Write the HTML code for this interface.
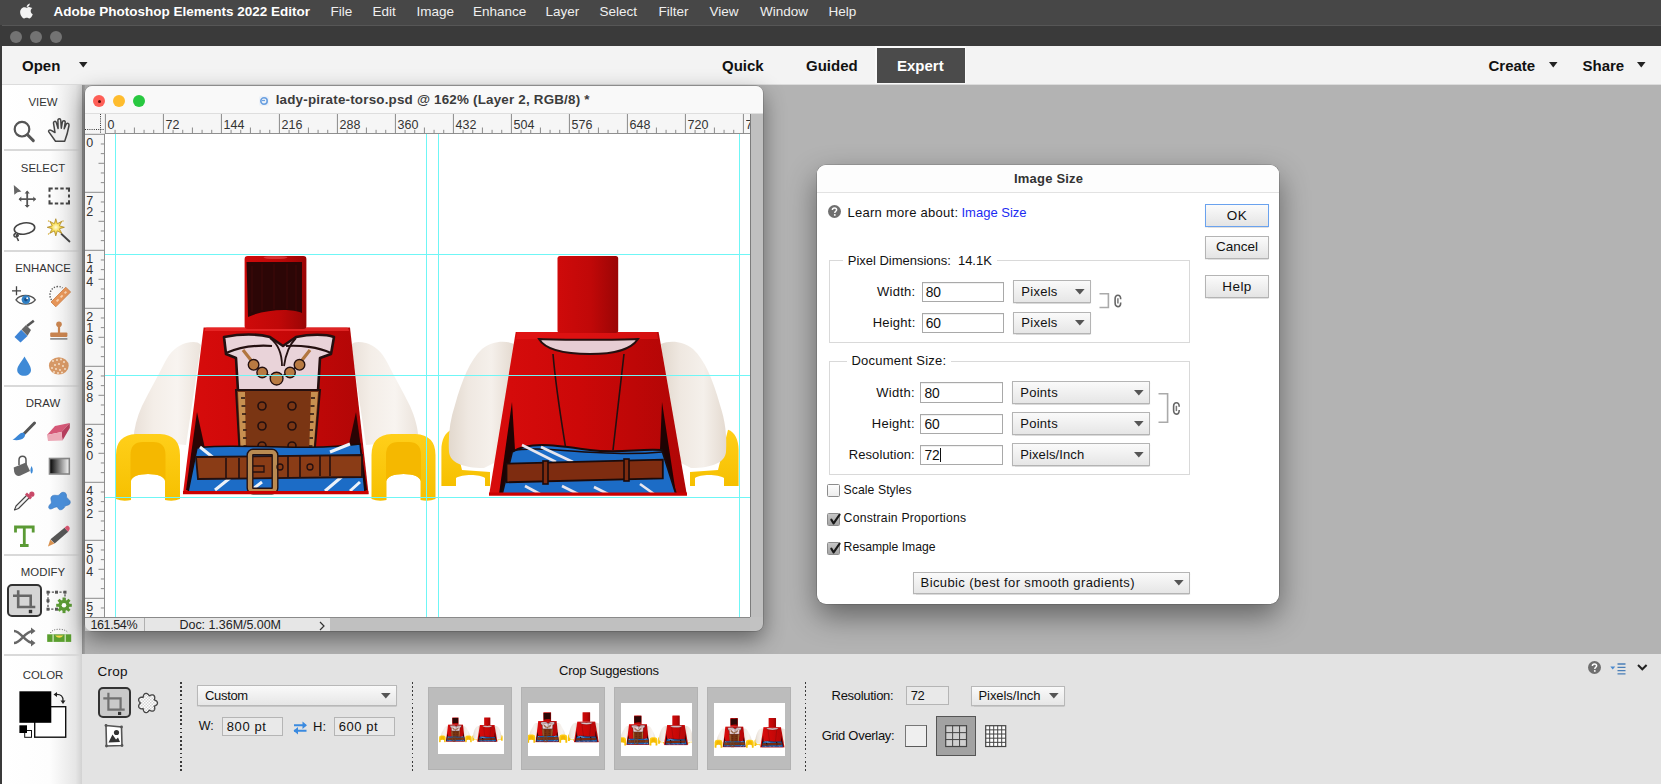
<!DOCTYPE html>
<html><head><meta charset="utf-8"><title>Photoshop Elements</title>
<style>
html,body{margin:0;padding:0;}
body{width:1661px;height:784px;position:relative;overflow:hidden;background:#b3b3b3;font-family:"Liberation Sans", sans-serif;}
.a{position:absolute;box-sizing:border-box;}
.t{position:absolute;white-space:nowrap;}
svg{position:absolute;overflow:visible;}
</style></head><body>

<div class="a" style="left:0px;top:0px;width:1661px;height:25px;background:#474747;"></div>
<svg style="left:20.3px;top:3.3px" width="14" height="17" viewBox="0 0 14 17"><g transform="scale(0.86)"><path d="M9.6 0.2c0.1 1.1-0.3 2.1-1 2.9-0.7 0.8-1.6 1.3-2.6 1.2-0.1-1 0.4-2 1-2.7 0.7-0.8 1.8-1.3 2.6-1.4z M12.6 5.6c-0.2 0.1-2 1.2-2 3.5 0 2.7 2.4 3.6 2.4 3.7 0 0.1-0.4 1.3-1.2 2.6-0.8 1.1-1.6 2.2-2.8 2.2-1.2 0-1.6-0.7-3-0.7-1.4 0-1.8 0.7-3 0.8C1.8 17.8 0.9 16.6 0.1 15.5-1.4 13.3-2.6 9.2-0.4 6.6 0.5 5.3 1.9 4.5 3.3 4.5c1.2 0 2.2 0.8 2.9 0.8 0.7 0 1.8-0.9 3.1-0.8 0.5 0 2 0.2 3.3 1.1z" fill="#f4f4f4" transform="translate(1.8,0.3)"/></g></svg>
<div class="t" style="left:53.5px;top:4.57px;font-size:13.5px;line-height:13.5px;color:#fff;font-weight:bold;">Adobe Photoshop Elements 2022 Editor</div>
<div class="t" style="left:330.5px;top:4.57px;font-size:13.5px;line-height:13.5px;color:#efefef;font-weight:normal;">File</div>
<div class="t" style="left:372.5px;top:4.57px;font-size:13.5px;line-height:13.5px;color:#efefef;font-weight:normal;">Edit</div>
<div class="t" style="left:416.5px;top:4.57px;font-size:13.5px;line-height:13.5px;color:#efefef;font-weight:normal;">Image</div>
<div class="t" style="left:473px;top:4.57px;font-size:13.5px;line-height:13.5px;color:#efefef;font-weight:normal;">Enhance</div>
<div class="t" style="left:545.5px;top:4.57px;font-size:13.5px;line-height:13.5px;color:#efefef;font-weight:normal;">Layer</div>
<div class="t" style="left:599.5px;top:4.57px;font-size:13.5px;line-height:13.5px;color:#efefef;font-weight:normal;">Select</div>
<div class="t" style="left:658.5px;top:4.57px;font-size:13.5px;line-height:13.5px;color:#efefef;font-weight:normal;">Filter</div>
<div class="t" style="left:709.5px;top:4.57px;font-size:13.5px;line-height:13.5px;color:#efefef;font-weight:normal;">View</div>
<div class="t" style="left:760px;top:4.57px;font-size:13.5px;line-height:13.5px;color:#efefef;font-weight:normal;">Window</div>
<div class="t" style="left:828.5px;top:4.57px;font-size:13.5px;line-height:13.5px;color:#efefef;font-weight:normal;">Help</div>
<div class="a" style="left:0px;top:25px;width:1661px;height:21px;background:#3a3a3a;border-top:1px solid #565656;"></div>
<div class="a" style="left:10px;top:31px;width:12px;height:12px;background:#737373;border-radius:50%;"></div>
<div class="a" style="left:30px;top:31px;width:12px;height:12px;background:#737373;border-radius:50%;"></div>
<div class="a" style="left:50px;top:31px;width:12px;height:12px;background:#737373;border-radius:50%;"></div>
<div class="a" style="left:0px;top:25px;width:2px;height:759px;background:#3a3a3a;"></div>
<div class="a" style="left:2px;top:46px;width:1659px;height:39px;background:#f3f3f3;border-bottom:1px solid #dcdcdc;"></div>
<div class="t" style="left:22px;top:57.80px;font-size:15px;line-height:15px;color:#111;font-weight:bold;">Open</div>
<svg style="left:79px;top:62px" width="9" height="6" viewBox="0 0 9 6"><path d="M0 0H8.5L4.25 5.5Z" fill="#222"/></svg>
<div class="t" style="left:722px;top:57.80px;font-size:15px;line-height:15px;color:#111;font-weight:bold;">Quick</div>
<div class="t" style="left:806px;top:57.80px;font-size:15px;line-height:15px;color:#111;font-weight:bold;">Guided</div>
<div class="a" style="left:875px;top:46px;width:91px;height:38px;background:#fafafa;"></div>
<div class="a" style="left:876.5px;top:47.5px;width:88px;height:35px;background:#4b4b4b;"></div>
<div class="t" style="left:897px;top:57.80px;font-size:15px;line-height:15px;color:#fff;font-weight:bold;">Expert</div>
<div class="t" style="left:1488.5px;top:57.80px;font-size:15px;line-height:15px;color:#111;font-weight:bold;">Create</div>
<svg style="left:1548.5px;top:62px" width="9" height="6" viewBox="0 0 9 6"><path d="M0 0H8.5L4.25 5.5Z" fill="#222"/></svg>
<div class="t" style="left:1582.5px;top:57.80px;font-size:15px;line-height:15px;color:#111;font-weight:bold;">Share</div>
<svg style="left:1636.5px;top:62px" width="9" height="6" viewBox="0 0 9 6"><path d="M0 0H8.5L4.25 5.5Z" fill="#222"/></svg>
<div class="a" style="left:82px;top:85px;width:1579px;height:569px;background:#b3b3b3;"></div>
<div class="a" style="left:2px;top:85px;width:80px;height:699px;background:linear-gradient(90deg,#ffffff 0%,#fdfdfd 60%,#e6e6e6 92%,#d2d2d2 100%);"></div>
<div class="a" style="left:82px;top:85px;width:3px;height:569px;background:linear-gradient(90deg,#8e8e8e,#a4a4a4);"></div>
<div class="a" style="left:4px;top:149px;width:76px;height:1.5px;background:#d9d9d9;"></div>
<div class="a" style="left:4px;top:250px;width:76px;height:1.5px;background:#d9d9d9;"></div>
<div class="a" style="left:4px;top:385px;width:76px;height:1.5px;background:#d9d9d9;"></div>
<div class="a" style="left:4px;top:554px;width:76px;height:1.5px;background:#d9d9d9;"></div>
<div class="a" style="left:4px;top:654px;width:76px;height:1.5px;background:#d9d9d9;"></div>
<div class="t" style="left:43px;transform:translateX(-50%);top:97.35px;font-size:11.4px;line-height:11.4px;color:#333;font-weight:normal;">VIEW</div>
<div class="t" style="left:43px;transform:translateX(-50%);top:162.55px;font-size:11.4px;line-height:11.4px;color:#333;font-weight:normal;">SELECT</div>
<div class="t" style="left:43px;transform:translateX(-50%);top:262.65px;font-size:11.4px;line-height:11.4px;color:#333;font-weight:normal;">ENHANCE</div>
<div class="t" style="left:43px;transform:translateX(-50%);top:398.15px;font-size:11.4px;line-height:11.4px;color:#333;font-weight:normal;">DRAW</div>
<div class="t" style="left:43px;transform:translateX(-50%);top:567.45px;font-size:11.4px;line-height:11.4px;color:#333;font-weight:normal;">MODIFY</div>
<div class="t" style="left:43px;transform:translateX(-50%);top:669.75px;font-size:11.4px;line-height:11.4px;color:#333;font-weight:normal;">COLOR</div>

<svg style="left:0px;top:0px" width="82" height="784" viewBox="0 0 82 784"><circle cx="22" cy="129.2" r="7.3" fill="none" stroke="#555" stroke-width="2.2"/><path d="M27.5 134.8L33.3 140.6" stroke="#555" stroke-width="3" stroke-linecap="round"/><path d="M55.5 141.2L64.7 141.2C66.3 137 68.2 130 69 125.5C69.4 123.5 67 122.3 66 124.5L64.2 128.8L65.2 122.5C65.5 120.5 62.7 120.2 62.3 122.3L61.3 128.2L60.8 120.5C60.6 118.3 57.8 118.3 57.9 120.5L58.1 128.5L56.3 122.6C55.8 120.6 53.1 121.2 53.5 123.2L55 132.5L51.2 130.3C49.5 129.3 48 130.6 48.8 131.9Z" fill="#efefef" stroke="#444" stroke-width="1.5" stroke-linejoin="round"/><path d="M13.8 185L21.4 191.5L17.5 192.3L14.3 194.8Z" fill="#666"/><path d="M27.2 191.5V207M19.5 199.2H35.5" stroke="#555" stroke-width="1.8"/><path d="M24.6 193.5L27.2 190.6L29.8 193.5ZM24.6 205L27.2 207.8L29.8 205ZM21.3 196.6L18.6 199.2L21.3 201.8ZM33.3 196.6L36 199.2L33.3 201.8Z" fill="#555"/><path d="M49.5 191.7V188.5H52.7 M65.8 188.5H69V191.7 M69 200.3V203.5H65.8 M52.7 203.5H49.5V200.3 M54.8 188.5H58.2 M54.8 203.5H58.2 M60.3 188.5H63.7 M60.3 203.5H63.7 M49.5 194.4V197.6 M69 194.4V197.6" fill="none" stroke="#444" stroke-width="2"/><ellipse cx="24.5" cy="228.5" rx="10.3" ry="5.6" transform="rotate(-8 24.5 228.5)" fill="none" stroke="#444" stroke-width="1.6"/><path d="M16 233.5C13 234 13.5 237 16 237C18.5 237 19 234.5 17 234.5C15 236 18 238.5 18.5 241" fill="none" stroke="#444" stroke-width="1.5"/><path d="M61.5 234L69.5 241.5" stroke="#444" stroke-width="1.8" stroke-linecap="round"/><defs><radialGradient id="wg"><stop offset="0" stop-color="#fffbe0"/><stop offset="0.45" stop-color="#f7df5a"/><stop offset="1" stop-color="#d9a820"/></radialGradient></defs><path d="M55.80 218.70 L57.29 223.70 L61.88 221.22 L59.40 225.81 L64.40 227.30 L59.40 228.79 L61.88 233.38 L57.29 230.90 L55.80 235.90 L54.31 230.90 L49.72 233.38 L52.20 228.79 L47.20 227.30 L52.20 225.81 L49.72 221.22 L54.31 223.70Z" fill="url(#wg)" stroke="#a88420" stroke-width="0.7"/><circle cx="48.5" cy="221" r="0.7" fill="#d9b030"/><circle cx="63" cy="221" r="0.7" fill="#d9b030"/><circle cx="48.5" cy="234" r="0.7" fill="#d9b030"/><path d="M12 290.8H21M16.5 286.3V295.3" stroke="#444" stroke-width="1.3"/><path d="M16 299.8C20 294 31 294 35.3 299.8C31 305.5 20 305.5 16 299.8Z" fill="#fff" stroke="#555" stroke-width="1.4"/><circle cx="25.9" cy="299.6" r="4.3" fill="#2f7fc4"/><circle cx="25.9" cy="299.6" r="1.8" fill="#1b4f86"/><circle cx="27.2" cy="298.2" r="1" fill="#fff"/><path d="M51.5 300C48.5 296 49.5 287 58 286.5C60 286.4 61.5 287 62.5 288" fill="none" stroke="#555" stroke-width="1.4" stroke-dasharray="1.3 1.5"/><path d="M51 302L65.8 287.2L70.6 292L55.8 306.8Z" fill="#e69558" stroke="#c87c46" stroke-width="0.8"/><path d="M56.6 301.4L58.6 299.4M60.6 297.4L62.6 295.4M64.6 293.4L66.4 291.6" stroke="#f7d2b0" stroke-width="1.8"/><path d="M14.5 337L21.2 329.8L27.5 336L20.5 342.5Z" fill="#3d84d6"/><path d="M21.5 329.5L26 325L31 330L27.5 335.8Z" fill="#666"/><path d="M27 326L33.8 320.8" stroke="#555" stroke-width="2.5"/><circle cx="59" cy="324.2" r="2.8" fill="#c7834f"/><rect x="57.9" y="325" width="2.2" height="8" fill="#c7834f"/><rect x="50.2" y="332.6" width="17.2" height="4.3" rx="1" fill="#c7834f"/><rect x="50.2" y="338.2" width="17.2" height="1.4" fill="#777"/><path d="M24.5 356.5C22 361 17.2 366 17.2 370C17.2 373.5 20.5 375.8 24.2 375.8C27.8 375.8 31 373.5 31 370C31 366 27 361 24.5 356.5Z" fill="#3f8ad6"/><ellipse cx="58.8" cy="365.8" rx="9.9" ry="8.6" fill="#d69866"/><circle cx="53" cy="361" r="0.9" fill="#f7e6d3"/><circle cx="57" cy="360" r="0.9" fill="#f7e6d3"/><circle cx="61" cy="359.5" r="0.9" fill="#f7e6d3"/><circle cx="64" cy="362" r="0.9" fill="#f7e6d3"/><circle cx="55" cy="365" r="0.9" fill="#f7e6d3"/><circle cx="59" cy="364" r="0.9" fill="#f7e6d3"/><circle cx="63" cy="366" r="0.9" fill="#f7e6d3"/><circle cx="52" cy="368" r="0.9" fill="#f7e6d3"/><circle cx="56" cy="369" r="0.9" fill="#f7e6d3"/><circle cx="60" cy="370" r="0.9" fill="#f7e6d3"/><circle cx="65" cy="369" r="0.9" fill="#f7e6d3"/><circle cx="58" cy="373" r="0.9" fill="#f7e6d3"/><circle cx="62" cy="372.5" r="0.9" fill="#f7e6d3"/><circle cx="54" cy="372" r="0.9" fill="#f7e6d3"/><path d="M24 433.8L34.5 423" stroke="#555" stroke-width="3" stroke-linecap="round"/><path d="M12.5 439.5C16 438.5 18 434 22 432.8C25 432 26 435 24 437.5C22 440 16 441 12.5 439.5Z" fill="#3a86d6"/><path d="M47 435L55 426L69.8 423L61.5 432Z" fill="#d55877"/><path d="M61.5 432L69.8 423L69.8 428L62.5 440.5Z" fill="#b73e5e"/><path d="M47 435L61.5 432L62.5 440.5L48 441Z" fill="#ecaab8"/><path d="M19 465V460C19 455 26 455 26 460V468" fill="none" stroke="#555" stroke-width="1.5"/><path d="M13.7 467.5L26 462.5L30 471L20 475.8Q15.5 476.5 14.2 472Z" fill="#666"/><path d="M31.6 466C30 469 30 472 31.6 473.7C33.2 472 33.2 469 31.6 466Z" fill="#3a88d6"/><defs><linearGradient id="grd" x1="0" x2="1"><stop offset="0" stop-color="#000"/><stop offset="1" stop-color="#fff"/></linearGradient></defs><rect x="49.5" y="458.5" width="19.8" height="15.5" fill="url(#grd)" stroke="#888" stroke-width="1.6"/><path d="M14.5 510L16 506L27.5 494.5L30 497L18.5 508.5Z" fill="#f4f4f4" stroke="#444" stroke-width="1.1" stroke-linejoin="round"/><path d="M25 494.5L27 492.5L32 497.5L30 499.5Z" fill="#c94868"/><circle cx="31.8" cy="494.2" r="2.6" fill="#c94868"/><path d="M52 496C55 494 58 497 60 494C62 491 67 492 66.5 496C66 499 71 499 70.2 503C69.5 506 66 504.5 64.5 507C63 510 59 511 58 508C57 505.5 54 508 51 509C48 509.5 48 506 50.5 504C53 502 49 499 52 496Z" fill="#4a8ed8" stroke="#3a78c0" stroke-width="0.6"/><path d="M15.5 532.5V527H33.2V532.5M24.3 527.5V544.8M20 545.5H28.6" fill="none" stroke="#5b9a35" stroke-width="2.8"/><path d="M48 546.5L50.2 539.5L54.5 543.5Z" fill="#d99250"/><path d="M50.5 539.3L64.5 527.8L68.2 531.8L54.7 543.6Z" fill="#555"/><path d="M64.5 527.8L66.5 526C68 525 70.5 527.5 69.5 529.5L68.2 531.8Z" fill="#d95570"/></svg>
<div class="a" style="left:7.3px;top:584px;width:34.5px;height:33px;background:#d5d5d5;border:2px solid #333;border-radius:5px;"></div>
<svg style="left:0px;top:0px" width="82" height="784" viewBox="0 0 82 784"><path d="M18.2 590.3V607H35.3M13 595.8H30.7V607" fill="none" stroke="#666" stroke-width="2.6"/><rect x="28.8" y="609.8" width="3.4" height="3.4" fill="#333"/><rect x="48" y="592.2" width="17" height="17" fill="none" stroke="#555" stroke-width="1.3" stroke-dasharray="2.2 1.6"/><rect x="46.5" y="590.7" width="3" height="3" fill="#555"/><rect x="55.0" y="590.7" width="3" height="3" fill="#555"/><rect x="63.5" y="590.7" width="3" height="3" fill="#555"/><rect x="46.5" y="599.2" width="3" height="3" fill="#555"/><rect x="46.5" y="607.7" width="3" height="3" fill="#555"/><rect x="55.0" y="607.7" width="3" height="3" fill="#555"/><circle cx="64" cy="605.3" r="5.6" fill="#5b9a35"/><rect x="68.80" y="603.80" width="3" height="3" transform="rotate(0 70.30 605.30)" fill="#5b9a35"/><rect x="66.95" y="608.25" width="3" height="3" transform="rotate(45 68.45 609.75)" fill="#5b9a35"/><rect x="62.50" y="610.10" width="3" height="3" transform="rotate(90 64.00 611.60)" fill="#5b9a35"/><rect x="58.05" y="608.25" width="3" height="3" transform="rotate(135 59.55 609.75)" fill="#5b9a35"/><rect x="56.20" y="603.80" width="3" height="3" transform="rotate(180 57.70 605.30)" fill="#5b9a35"/><rect x="58.05" y="599.35" width="3" height="3" transform="rotate(225 59.55 600.85)" fill="#5b9a35"/><rect x="62.50" y="597.50" width="3" height="3" transform="rotate(270 64.00 599.00)" fill="#5b9a35"/><rect x="66.95" y="599.35" width="3" height="3" transform="rotate(315 68.45 600.85)" fill="#5b9a35"/><circle cx="64" cy="605.3" r="2.3" fill="#fff"/><path d="M14 631C21 631 25 643 33 643M14 643C21 643 25 631 33 631" fill="none" stroke="#666" stroke-width="2.4"/><path d="M31 627.5L35.5 631L31 634.5ZM31 639.5L35.5 643L31 646.5Z" fill="#666"/><rect x="47.2" y="634.3" width="24" height="7.6" fill="#5a9f2f"/><rect x="52.5" y="634.3" width="1.2" height="7.6" fill="#d7ebc8"/><rect x="64.6" y="634.3" width="1.2" height="7.6" fill="#d7ebc8"/><path d="M55 635.5Q59.2 640 63.5 635.5Z" fill="#f5d64a"/><path d="M50.5 633C52 628 66 628 68 633" fill="none" stroke="#666" stroke-width="1" stroke-dasharray="1 1.5"/><rect x="34.7" y="706.7" width="31" height="30.5" fill="#fff" stroke="#111" stroke-width="1.4"/><rect x="19.4" y="691.3" width="31.9" height="31.5" fill="#000"/><rect x="24.7" y="730.5" width="6.8" height="6.8" fill="#fff" stroke="#111" stroke-width="1"/><rect x="19.4" y="725.3" width="7.6" height="7.7" fill="#000"/><path d="M55.5 694.5C61 694 63.5 696.5 63 701" fill="none" stroke="#222" stroke-width="1.3"/><path d="M53.5 694.5L57 692V697Z M60.5 700.5H65.5L63 704Z" fill="#222"/></svg>
<div class="a" style="left:85px;top:86px;width:678px;height:545px;background:#c2c2c2;border-radius:7px;box-shadow:0 8px 22px rgba(0,0,0,0.45), 0 0 0 0.5px rgba(0,0,0,0.25);"></div>
<div class="a" style="left:85px;top:86px;width:678px;height:28px;background:#f9f9f9;border-radius:7px 7px 0 0;border-bottom:1px solid #dedede;"></div>
<div class="a" style="left:93.0px;top:94.9px;width:12.4px;height:12.4px;background:#fe5f57;border-radius:50%;"></div>
<div class="a" style="left:113.0px;top:94.9px;width:12.4px;height:12.4px;background:#febc2e;border-radius:50%;"></div>
<div class="a" style="left:132.9px;top:94.9px;width:12.4px;height:12.4px;background:#28c840;border-radius:50%;"></div>
<div class="a" style="left:97.5px;top:99.6px;width:3.4px;height:3.4px;background:#5a0a06;border-radius:50%;"></div>
<svg style="left:259px;top:95.5px" width="10" height="10" viewBox="0 0 10 10"><rect x="0" y="0" width="10" height="10" rx="2" fill="#eef2f8"/><circle cx="5" cy="5" r="3.2" fill="none" stroke="#6aa0e0" stroke-width="1.6"/><path d="M3 4.5H6" stroke="#6aa0e0" stroke-width="1.2"/></svg>
<div class="t" style="left:275.7px;top:92.96px;font-size:13.4px;line-height:13.4px;color:#3c3c3c;font-weight:bold;letter-spacing:0.196px;">lady-pirate-torso.psd @ 162% (Layer 2, RGB/8) *</div>
<div class="a" style="left:85px;top:114px;width:665px;height:20px;background:#f6f6f6;"></div>
<div class="a" style="left:85px;top:134px;width:20px;height:483px;background:#f6f6f6;"></div>
<div class="a" style="left:105px;top:133px;width:645px;height:1px;background:#8f8f8f;"></div>
<div class="a" style="left:104px;top:134px;width:1px;height:483px;background:#8f8f8f;"></div>
<div class="a" style="left:105px;top:134px;width:645px;height:483px;background:#fff;"></div>
<div class="a" style="left:750px;top:114px;width:13px;height:503px;background:#c0c0c0;border-left:1.5px solid #7c7c7c;"></div>
<svg style="left:0px;top:0px" width="1661" height="784" viewBox="0 0 1661 784"><rect x="104.90" y="114" width="1" height="20" fill="#8a8a8a"/><rect x="114.57" y="129.80" width="1" height="3.2" fill="#8a8a8a"/><rect x="124.23" y="129.80" width="1" height="3.2" fill="#8a8a8a"/><rect x="133.90" y="127.50" width="1" height="5.5" fill="#8a8a8a"/><rect x="143.57" y="129.80" width="1" height="3.2" fill="#8a8a8a"/><rect x="153.23" y="129.80" width="1" height="3.2" fill="#8a8a8a"/><rect x="162.90" y="114" width="1" height="20" fill="#8a8a8a"/><rect x="172.57" y="129.80" width="1" height="3.2" fill="#8a8a8a"/><rect x="182.23" y="129.80" width="1" height="3.2" fill="#8a8a8a"/><rect x="191.90" y="127.50" width="1" height="5.5" fill="#8a8a8a"/><rect x="201.57" y="129.80" width="1" height="3.2" fill="#8a8a8a"/><rect x="211.23" y="129.80" width="1" height="3.2" fill="#8a8a8a"/><rect x="220.90" y="114" width="1" height="20" fill="#8a8a8a"/><rect x="230.57" y="129.80" width="1" height="3.2" fill="#8a8a8a"/><rect x="240.23" y="129.80" width="1" height="3.2" fill="#8a8a8a"/><rect x="249.90" y="127.50" width="1" height="5.5" fill="#8a8a8a"/><rect x="259.57" y="129.80" width="1" height="3.2" fill="#8a8a8a"/><rect x="269.23" y="129.80" width="1" height="3.2" fill="#8a8a8a"/><rect x="278.90" y="114" width="1" height="20" fill="#8a8a8a"/><rect x="288.57" y="129.80" width="1" height="3.2" fill="#8a8a8a"/><rect x="298.23" y="129.80" width="1" height="3.2" fill="#8a8a8a"/><rect x="307.90" y="127.50" width="1" height="5.5" fill="#8a8a8a"/><rect x="317.57" y="129.80" width="1" height="3.2" fill="#8a8a8a"/><rect x="327.23" y="129.80" width="1" height="3.2" fill="#8a8a8a"/><rect x="336.90" y="114" width="1" height="20" fill="#8a8a8a"/><rect x="346.57" y="129.80" width="1" height="3.2" fill="#8a8a8a"/><rect x="356.23" y="129.80" width="1" height="3.2" fill="#8a8a8a"/><rect x="365.90" y="127.50" width="1" height="5.5" fill="#8a8a8a"/><rect x="375.57" y="129.80" width="1" height="3.2" fill="#8a8a8a"/><rect x="385.23" y="129.80" width="1" height="3.2" fill="#8a8a8a"/><rect x="394.90" y="114" width="1" height="20" fill="#8a8a8a"/><rect x="404.57" y="129.80" width="1" height="3.2" fill="#8a8a8a"/><rect x="414.23" y="129.80" width="1" height="3.2" fill="#8a8a8a"/><rect x="423.90" y="127.50" width="1" height="5.5" fill="#8a8a8a"/><rect x="433.57" y="129.80" width="1" height="3.2" fill="#8a8a8a"/><rect x="443.23" y="129.80" width="1" height="3.2" fill="#8a8a8a"/><rect x="452.90" y="114" width="1" height="20" fill="#8a8a8a"/><rect x="462.57" y="129.80" width="1" height="3.2" fill="#8a8a8a"/><rect x="472.23" y="129.80" width="1" height="3.2" fill="#8a8a8a"/><rect x="481.90" y="127.50" width="1" height="5.5" fill="#8a8a8a"/><rect x="491.57" y="129.80" width="1" height="3.2" fill="#8a8a8a"/><rect x="501.23" y="129.80" width="1" height="3.2" fill="#8a8a8a"/><rect x="510.90" y="114" width="1" height="20" fill="#8a8a8a"/><rect x="520.57" y="129.80" width="1" height="3.2" fill="#8a8a8a"/><rect x="530.23" y="129.80" width="1" height="3.2" fill="#8a8a8a"/><rect x="539.90" y="127.50" width="1" height="5.5" fill="#8a8a8a"/><rect x="549.57" y="129.80" width="1" height="3.2" fill="#8a8a8a"/><rect x="559.23" y="129.80" width="1" height="3.2" fill="#8a8a8a"/><rect x="568.90" y="114" width="1" height="20" fill="#8a8a8a"/><rect x="578.57" y="129.80" width="1" height="3.2" fill="#8a8a8a"/><rect x="588.23" y="129.80" width="1" height="3.2" fill="#8a8a8a"/><rect x="597.90" y="127.50" width="1" height="5.5" fill="#8a8a8a"/><rect x="607.57" y="129.80" width="1" height="3.2" fill="#8a8a8a"/><rect x="617.23" y="129.80" width="1" height="3.2" fill="#8a8a8a"/><rect x="626.90" y="114" width="1" height="20" fill="#8a8a8a"/><rect x="636.57" y="129.80" width="1" height="3.2" fill="#8a8a8a"/><rect x="646.23" y="129.80" width="1" height="3.2" fill="#8a8a8a"/><rect x="655.90" y="127.50" width="1" height="5.5" fill="#8a8a8a"/><rect x="665.57" y="129.80" width="1" height="3.2" fill="#8a8a8a"/><rect x="675.23" y="129.80" width="1" height="3.2" fill="#8a8a8a"/><rect x="684.90" y="114" width="1" height="20" fill="#8a8a8a"/><rect x="694.57" y="129.80" width="1" height="3.2" fill="#8a8a8a"/><rect x="704.23" y="129.80" width="1" height="3.2" fill="#8a8a8a"/><rect x="713.90" y="127.50" width="1" height="5.5" fill="#8a8a8a"/><rect x="723.57" y="129.80" width="1" height="3.2" fill="#8a8a8a"/><rect x="733.23" y="129.80" width="1" height="3.2" fill="#8a8a8a"/><rect x="742.90" y="114" width="1" height="20" fill="#8a8a8a"/><rect x="85" y="133.80" width="20" height="1" fill="#8a8a8a"/><rect x="100.80" y="143.47" width="3.2" height="1" fill="#8a8a8a"/><rect x="100.80" y="153.13" width="3.2" height="1" fill="#8a8a8a"/><rect x="98.50" y="162.80" width="5.5" height="1" fill="#8a8a8a"/><rect x="100.80" y="172.47" width="3.2" height="1" fill="#8a8a8a"/><rect x="100.80" y="182.13" width="3.2" height="1" fill="#8a8a8a"/><rect x="85" y="191.80" width="20" height="1" fill="#8a8a8a"/><rect x="100.80" y="201.47" width="3.2" height="1" fill="#8a8a8a"/><rect x="100.80" y="211.13" width="3.2" height="1" fill="#8a8a8a"/><rect x="98.50" y="220.80" width="5.5" height="1" fill="#8a8a8a"/><rect x="100.80" y="230.47" width="3.2" height="1" fill="#8a8a8a"/><rect x="100.80" y="240.13" width="3.2" height="1" fill="#8a8a8a"/><rect x="85" y="249.80" width="20" height="1" fill="#8a8a8a"/><rect x="100.80" y="259.47" width="3.2" height="1" fill="#8a8a8a"/><rect x="100.80" y="269.13" width="3.2" height="1" fill="#8a8a8a"/><rect x="98.50" y="278.80" width="5.5" height="1" fill="#8a8a8a"/><rect x="100.80" y="288.47" width="3.2" height="1" fill="#8a8a8a"/><rect x="100.80" y="298.13" width="3.2" height="1" fill="#8a8a8a"/><rect x="85" y="307.80" width="20" height="1" fill="#8a8a8a"/><rect x="100.80" y="317.47" width="3.2" height="1" fill="#8a8a8a"/><rect x="100.80" y="327.13" width="3.2" height="1" fill="#8a8a8a"/><rect x="98.50" y="336.80" width="5.5" height="1" fill="#8a8a8a"/><rect x="100.80" y="346.47" width="3.2" height="1" fill="#8a8a8a"/><rect x="100.80" y="356.13" width="3.2" height="1" fill="#8a8a8a"/><rect x="85" y="365.80" width="20" height="1" fill="#8a8a8a"/><rect x="100.80" y="375.47" width="3.2" height="1" fill="#8a8a8a"/><rect x="100.80" y="385.13" width="3.2" height="1" fill="#8a8a8a"/><rect x="98.50" y="394.80" width="5.5" height="1" fill="#8a8a8a"/><rect x="100.80" y="404.47" width="3.2" height="1" fill="#8a8a8a"/><rect x="100.80" y="414.13" width="3.2" height="1" fill="#8a8a8a"/><rect x="85" y="423.80" width="20" height="1" fill="#8a8a8a"/><rect x="100.80" y="433.47" width="3.2" height="1" fill="#8a8a8a"/><rect x="100.80" y="443.13" width="3.2" height="1" fill="#8a8a8a"/><rect x="98.50" y="452.80" width="5.5" height="1" fill="#8a8a8a"/><rect x="100.80" y="462.47" width="3.2" height="1" fill="#8a8a8a"/><rect x="100.80" y="472.13" width="3.2" height="1" fill="#8a8a8a"/><rect x="85" y="481.80" width="20" height="1" fill="#8a8a8a"/><rect x="100.80" y="491.47" width="3.2" height="1" fill="#8a8a8a"/><rect x="100.80" y="501.13" width="3.2" height="1" fill="#8a8a8a"/><rect x="98.50" y="510.80" width="5.5" height="1" fill="#8a8a8a"/><rect x="100.80" y="520.47" width="3.2" height="1" fill="#8a8a8a"/><rect x="100.80" y="530.13" width="3.2" height="1" fill="#8a8a8a"/><rect x="85" y="539.80" width="20" height="1" fill="#8a8a8a"/><rect x="100.80" y="549.47" width="3.2" height="1" fill="#8a8a8a"/><rect x="100.80" y="559.13" width="3.2" height="1" fill="#8a8a8a"/><rect x="98.50" y="568.80" width="5.5" height="1" fill="#8a8a8a"/><rect x="100.80" y="578.47" width="3.2" height="1" fill="#8a8a8a"/><rect x="100.80" y="588.13" width="3.2" height="1" fill="#8a8a8a"/><rect x="85" y="597.80" width="20" height="1" fill="#8a8a8a"/><rect x="100.80" y="607.47" width="3.2" height="1" fill="#8a8a8a"/><path d="M100.5 114V133M85 129.5H104" stroke="#333" stroke-width="1" stroke-dasharray="1 1.2"/></svg>
<div class="t" style="left:107.6px;top:118.82px;font-size:12.5px;line-height:12.5px;color:#333;font-weight:normal;">0</div>
<div class="t" style="left:165.6px;top:118.82px;font-size:12.5px;line-height:12.5px;color:#333;font-weight:normal;">72</div>
<div class="t" style="left:223.6px;top:118.82px;font-size:12.5px;line-height:12.5px;color:#333;font-weight:normal;">144</div>
<div class="t" style="left:281.6px;top:118.82px;font-size:12.5px;line-height:12.5px;color:#333;font-weight:normal;">216</div>
<div class="t" style="left:339.6px;top:118.82px;font-size:12.5px;line-height:12.5px;color:#333;font-weight:normal;">288</div>
<div class="t" style="left:397.6px;top:118.82px;font-size:12.5px;line-height:12.5px;color:#333;font-weight:normal;">360</div>
<div class="t" style="left:455.6px;top:118.82px;font-size:12.5px;line-height:12.5px;color:#333;font-weight:normal;">432</div>
<div class="t" style="left:513.6px;top:118.82px;font-size:12.5px;line-height:12.5px;color:#333;font-weight:normal;">504</div>
<div class="t" style="left:571.6px;top:118.82px;font-size:12.5px;line-height:12.5px;color:#333;font-weight:normal;">576</div>
<div class="t" style="left:629.6px;top:118.82px;font-size:12.5px;line-height:12.5px;color:#333;font-weight:normal;">648</div>
<div class="t" style="left:687.6px;top:118.82px;font-size:12.5px;line-height:12.5px;color:#333;font-weight:normal;">720</div>
<div class="a" style="left:745.60px;top:114px;width:4.40px;height:19px;overflow:hidden;"><div class="t" style="left:0;top:4.82px;font-size:12.5px;line-height:12.5px;color:#333;">7</div></div>
<div class="t" style="left:86.3px;top:136.92px;font-size:12.5px;line-height:12.5px;color:#333;font-weight:normal;">0</div>
<div class="t" style="left:86.3px;top:194.92px;font-size:12.5px;line-height:12.5px;color:#333;font-weight:normal;">7</div>
<div class="t" style="left:86.3px;top:206.42px;font-size:12.5px;line-height:12.5px;color:#333;font-weight:normal;">2</div>
<div class="t" style="left:86.3px;top:252.92px;font-size:12.5px;line-height:12.5px;color:#333;font-weight:normal;">1</div>
<div class="t" style="left:86.3px;top:264.42px;font-size:12.5px;line-height:12.5px;color:#333;font-weight:normal;">4</div>
<div class="t" style="left:86.3px;top:275.92px;font-size:12.5px;line-height:12.5px;color:#333;font-weight:normal;">4</div>
<div class="t" style="left:86.3px;top:310.92px;font-size:12.5px;line-height:12.5px;color:#333;font-weight:normal;">2</div>
<div class="t" style="left:86.3px;top:322.42px;font-size:12.5px;line-height:12.5px;color:#333;font-weight:normal;">1</div>
<div class="t" style="left:86.3px;top:333.92px;font-size:12.5px;line-height:12.5px;color:#333;font-weight:normal;">6</div>
<div class="t" style="left:86.3px;top:368.92px;font-size:12.5px;line-height:12.5px;color:#333;font-weight:normal;">2</div>
<div class="t" style="left:86.3px;top:380.42px;font-size:12.5px;line-height:12.5px;color:#333;font-weight:normal;">8</div>
<div class="t" style="left:86.3px;top:391.92px;font-size:12.5px;line-height:12.5px;color:#333;font-weight:normal;">8</div>
<div class="t" style="left:86.3px;top:426.92px;font-size:12.5px;line-height:12.5px;color:#333;font-weight:normal;">3</div>
<div class="t" style="left:86.3px;top:438.42px;font-size:12.5px;line-height:12.5px;color:#333;font-weight:normal;">6</div>
<div class="t" style="left:86.3px;top:449.92px;font-size:12.5px;line-height:12.5px;color:#333;font-weight:normal;">0</div>
<div class="t" style="left:86.3px;top:484.92px;font-size:12.5px;line-height:12.5px;color:#333;font-weight:normal;">4</div>
<div class="t" style="left:86.3px;top:496.42px;font-size:12.5px;line-height:12.5px;color:#333;font-weight:normal;">3</div>
<div class="t" style="left:86.3px;top:507.92px;font-size:12.5px;line-height:12.5px;color:#333;font-weight:normal;">2</div>
<div class="t" style="left:86.3px;top:542.92px;font-size:12.5px;line-height:12.5px;color:#333;font-weight:normal;">5</div>
<div class="t" style="left:86.3px;top:554.42px;font-size:12.5px;line-height:12.5px;color:#333;font-weight:normal;">0</div>
<div class="t" style="left:86.3px;top:565.92px;font-size:12.5px;line-height:12.5px;color:#333;font-weight:normal;">4</div>
<div class="t" style="left:86.3px;top:600.92px;font-size:12.5px;line-height:12.5px;color:#333;font-weight:normal;">5</div>
<div class="a" style="left:85px;top:600.30px;width:16px;height:16.70px;overflow:hidden;"><div class="t" style="left:1.3px;top:12.12px;font-size:12.5px;line-height:12.5px;color:#333;">7</div></div>
<svg style="left:0px;top:0px" width="1661" height="784" viewBox="0 0 1661 784"><g id="torsos"><defs>
<linearGradient id="red1" x1="0" x2="1"><stop offset="0" stop-color="#d80c0c"/><stop offset="0.45" stop-color="#cc0808"/><stop offset="1" stop-color="#b00606"/></linearGradient>
<linearGradient id="neck1" x1="0" x2="1"><stop offset="0" stop-color="#cf0a0a"/><stop offset="0.55" stop-color="#c00808"/><stop offset="1" stop-color="#9a0505"/></linearGradient>
<linearGradient id="armW" x1="0" x2="1"><stop offset="0" stop-color="#e9e0d8"/><stop offset="0.3" stop-color="#f4eee8"/><stop offset="0.65" stop-color="#f8f4f0"/><stop offset="1" stop-color="#ebe3db"/></linearGradient>
<linearGradient id="armW2" x1="0" x2="1"><stop offset="0" stop-color="#e2d8cd"/><stop offset="0.3" stop-color="#efe8e1"/><stop offset="0.65" stop-color="#f5f0eb"/><stop offset="1" stop-color="#e4dad0"/></linearGradient>
<linearGradient id="hand" x1="0" x2="0" y1="0" y2="1"><stop offset="0" stop-color="#ffcf1a"/><stop offset="1" stop-color="#f6c000"/></linearGradient>
</defs><path d="M201 345C197 341 192 342 186 343C178 345 170 352 165 362C158 376 150 390 142 406C137 417 134 428 133.4 440L186 445Z" fill="url(#armW)"/><path d="M351 345C355 341 360 342 366 343C374 345 382 352 387 362C394 376 402 390 410 406C415 417 418 428 418.6 440L366 445Z" fill="url(#armW)"/><g transform="translate(116,433)"><path d="M0 66V22Q0 2 20 1H44Q64 2 64 22V66Q57 69 49 67V48Q47 41 32.0 41Q17 41 15 48V67Q7 69 0 66Z" fill="url(#hand)"/><path d="M14.5 48V22Q14.5 9 27 9H37Q49.5 9 49.5 22V48Q47 41 32.0 41Q17 41 14.5 48Z" fill="#f5b800"/></g><g transform="translate(371.5,433) translate(64,0) scale(-1,1)"><path d="M0 66V22Q0 2 20 1H44Q64 2 64 22V66Q57 69 49 67V48Q47 41 32.0 41Q17 41 15 48V67Q7 69 0 66Z" fill="url(#hand)"/><path d="M14.5 48V22Q14.5 9 27 9H37Q49.5 9 49.5 22V48Q47 41 32.0 41Q17 41 14.5 48Z" fill="#f5b800"/></g><path d="M203.6 327.5L350 327.5L368.6 494.3L182.9 494.3Z" fill="url(#red1)"/><path d="M207 327.5Q205 327.5 204.6 331L349 331Q348.6 327.5 346.5 327.5Z" fill="#f03030" opacity="0.7"/><path d="M197 412L186 490L214 490Z" fill="#2a0404"/><path d="M356 412L367 490L339 490Z" fill="#2a0404"/><rect x="244.6" y="256" width="61.8" height="73" rx="3" fill="url(#neck1)"/><path d="M246.5 262H302V313C292 308 265 309 248 317Z" fill="#2c0606"/><path d="M252 266V312M262 264V310M274 264V309M287 264V309M296 265V311" stroke="#4a0c0a" stroke-width="2" opacity="0.3"/><ellipse cx="275.5" cy="257.5" rx="12" ry="1.6" fill="#e85050" opacity="0.6"/><path d="M224 337C240 334 258 334 270 337L283 346L296 337C310 334 326 334 334 337L331 354L320 358L318 391L238 391L236 358L226 354Z" fill="#e9d3d9" stroke="#241010" stroke-width="2.6" stroke-linejoin="round"/><path d="M226 353C240 347 258 345 272 346M286 346C300 345 318 347 331 353" fill="none" stroke="#241010" stroke-width="2.2"/><path d="M270 338C278 344 282 352 282 366M296 338C290 344 286 352 284 366" fill="none" stroke="#241010" stroke-width="1.8"/><path d="M243 350L254 364M310 350L299 364" stroke="#b27640" stroke-width="3.2"/><path d="M254 364L262 372L276.5 379L290 372L299 364" fill="none" stroke="#241010" stroke-width="1.5"/><circle cx="253.6" cy="364.8" r="5.3" fill="#b87a42" stroke="#241010" stroke-width="1.4"/><circle cx="262.2" cy="372.5" r="5.3" fill="#b87a42" stroke="#241010" stroke-width="1.4"/><circle cx="276.6" cy="378.6" r="6.4" fill="#b87a42" stroke="#241010" stroke-width="1.4"/><circle cx="290" cy="372.5" r="5.3" fill="#b87a42" stroke="#241010" stroke-width="1.4"/><circle cx="299.5" cy="364.8" r="5.3" fill="#b87a42" stroke="#241010" stroke-width="1.4"/><path d="M236 390L320 390L314 458L240 458Z" fill="#7a3513" stroke="#241010" stroke-width="2"/><path d="M238 392L245 392L246 456L241 456Z M318 392L311 392L309 456L313 456Z" fill="#c79050"/><path d="M241 398H245M241.5 406H245.5M242 414H246M242.5 422H246M243 430H246.5M243 438H246.5M243.5 446H246.5M311 398H315M310.5 406H314.5M310 414H314M310 422H313.5M309.5 430H313M309.5 438H313M309 446H312.5" stroke="#241010" stroke-width="1.5"/><circle cx="262" cy="406" r="4" fill="none" stroke="#241010" stroke-width="1.6"/><circle cx="292" cy="406" r="4" fill="none" stroke="#241010" stroke-width="1.6"/><circle cx="262" cy="426" r="4" fill="none" stroke="#241010" stroke-width="1.6"/><circle cx="292" cy="426" r="4" fill="none" stroke="#241010" stroke-width="1.6"/><circle cx="262" cy="446" r="4" fill="none" stroke="#241010" stroke-width="1.6"/><circle cx="292" cy="446" r="4" fill="none" stroke="#241010" stroke-width="1.6"/><path d="M197 448C225 442 300 452 360 444L365 492L188 492Z" fill="#1c6cc6" stroke="#1a0a0a" stroke-width="1.5"/><path d="M200 447L215 459M330 452L350 444M215 490L230 478M325 491L345 474M250 491L262 482M350 491L360 482" stroke="#eef2f8" stroke-width="3"/><path d="M196 457L362 455L362 477L198 479Z" fill="#8a3c16" stroke="#241010" stroke-width="1.8"/><rect x="250" y="452" width="25" height="39" rx="3" fill="none" stroke="#241010" stroke-width="7"/><rect x="250" y="452" width="25" height="39" rx="3" fill="none" stroke="#b98a52" stroke-width="4.2"/><path d="M253 466H264V472H253" fill="none" stroke="#241010" stroke-width="1.3"/><path d="M226 458V478M239 458V478M288 456V477M300 456V477M320 456V476M330 456V476" stroke="#241010" stroke-width="1.6"/><circle cx="280" cy="467" r="3" fill="none" stroke="#241010" stroke-width="1.3"/><circle cx="310" cy="467" r="3" fill="none" stroke="#241010" stroke-width="1.3"/><path d="M183 492.5L368.4 492.5" stroke="#c00" stroke-width="3"/><path d="M441.4 486V450C441.4 440 445 432 452 429.8L462 470L490 472V486H485V478C480 474 462 474 456 478V486Z" fill="url(#hand)"/><path d="M738.6 486V450C738.6 440 735 432 728 429.8L718 470L690 472V486H695V478C700 474 718 474 724 478V486Z" fill="url(#hand)"/><path d="M514 344C505 340 492 341 482 349C470 360 462 380 455 405C450 420 448 435 449 452C450 462 462 468 484 468L500 460Z" fill="url(#armW2)"/><path d="M661 344C670 340 683 341 693 349C705 360 713 380 720 405C725 420 727 435 726 452C725 462 713 468 691 468L675 460Z" fill="url(#armW2)"/><path d="M515.7 332L658.6 332L687 495.4L489 495.4Z" fill="url(#red1)"/><path d="M517 332L657 332L658 339L516 339Z" fill="#e81818" opacity="0.6"/><path d="M512 402L499 494L517 494L515 450Z" fill="#1e0303"/><path d="M662 402L676 494L658 494L660 450Z" fill="#1e0303"/><rect x="557.5" y="256" width="60.7" height="77" rx="2.5" fill="url(#neck1)"/><path d="M539 339C560 340 618 340 638 339C630 351 612 354 590 354C566 354 546 351 539 339Z" fill="#e6cdd3" stroke="#241010" stroke-width="2"/><path d="M553 354C556 390 562 425 566 450M624 354C620 390 616 425 613 450" fill="none" stroke="#241010" stroke-width="1.6"/><path d="M502 494L512 452C530 440 560 446 590 450C620 454 640 448 662 450L676 494Z" fill="#1c6cc6" stroke="#1a0a0a" stroke-width="2"/><path d="M512 451C540 444 600 458 662 452" fill="none" stroke="#1a0a0a" stroke-width="1.5"/><path d="M522 445L556 462M541 447L573 462M562 486L578 494M594 487L608 494M640 484L654 494M525 486L540 494" stroke="#e8e6ee" stroke-width="2.6"/><path d="M506.5 463.7L662.8 459.7L662.8 478.3L506.5 482.3Z" fill="#7e2c10" stroke="#1a0a0a" stroke-width="1.8"/><rect x="543" y="461" width="5" height="23" fill="#7e2c10" stroke="#1a0a0a" stroke-width="1.6"/><rect x="624" y="459" width="5" height="22" fill="#7e2c10" stroke="#1a0a0a" stroke-width="1.6"/><path d="M489 494L687 494" stroke="#c00" stroke-width="3"/></g></svg>
<div class="a" style="left:114.8px;top:134px;width:1px;height:483px;background:#6ff6f6;"></div>
<div class="a" style="left:426.4px;top:134px;width:1px;height:483px;background:#6ff6f6;"></div>
<div class="a" style="left:438.3px;top:134px;width:1px;height:483px;background:#6ff6f6;"></div>
<div class="a" style="left:738.5px;top:134px;width:1px;height:483px;background:#6ff6f6;"></div>
<div class="a" style="left:105px;top:254.0px;width:645px;height:1px;background:#6ff6f6;"></div>
<div class="a" style="left:105px;top:374.9px;width:645px;height:1px;background:#6ff6f6;"></div>
<div class="a" style="left:105px;top:496.8px;width:645px;height:1px;background:#6ff6f6;"></div>
<div class="a" style="left:85px;top:617px;width:665px;height:14px;background:#c0c0c0;border-top:1px solid #8a8a8a;"></div>
<div class="a" style="left:85px;top:617px;width:245px;height:14px;background:#e6e6e6;border-top:1px solid #8a8a8a;border-radius:0 0 0 7px;"></div>
<div class="a" style="left:144px;top:618px;width:1px;height:13px;background:#b0b0b0;"></div>
<div class="t" style="left:90.5px;top:618.92px;font-size:12.5px;line-height:12.5px;color:#222;font-weight:normal;letter-spacing:-0.391px;">161.54%</div>
<div class="t" style="left:179.5px;top:618.92px;font-size:12.5px;line-height:12.5px;color:#222;font-weight:normal;letter-spacing:-0.042px;">Doc: 1.36M/5.00M</div>
<svg style="left:319px;top:621px" width="6" height="10" viewBox="0 0 6 10"><path d="M1 1L5 5L1 9" fill="none" stroke="#333" stroke-width="1.2"/></svg>
<div class="a" style="left:817px;top:165px;width:462px;height:439px;background:#fff;border-radius:9px;box-shadow:0 12px 30px rgba(0,0,0,0.45), 0 0 0 0.6px rgba(0,0,0,0.22);"></div>
<div class="a" style="left:817px;top:165px;width:462px;height:28px;background:#fdfdfd;border-radius:9px 9px 0 0;border-bottom:1px solid #e2e2e2;"></div>
<div class="t" style="left:1014px;top:171.90px;font-size:13px;line-height:13px;color:#333;font-weight:bold;letter-spacing:0.200px;">Image Size</div>
<svg style="left:827.5px;top:205px" width="13" height="13" viewBox="0 0 13 13"><circle cx="6.5" cy="6.5" r="6.5" fill="#6f6f6f"/><path d="M4.4 5C4.4 3.6 5.3 2.9 6.5 2.9C7.8 2.9 8.6 3.7 8.6 4.8C8.6 6.2 6.8 6.3 6.8 7.9" fill="none" stroke="#fff" stroke-width="1.5"/><circle cx="6.8" cy="9.9" r="0.95" fill="#fff"/></svg>
<div class="t" style="left:847.5px;top:205.80px;font-size:13px;line-height:13px;color:#111;font-weight:normal;letter-spacing:0.266px;">Learn more about:</div>
<div class="t" style="left:961.5px;top:205.80px;font-size:13px;line-height:13px;color:#1b2cf2;font-weight:normal;letter-spacing:-0.004px;">Image Size</div>
<div class="a" style="left:828.5px;top:260px;width:361.29999999999995px;height:82.5px;border:1.2px solid #d9d9d9;"></div>
<div class="a" style="left:842.8px;top:257px;width:154px;height:6px;background:#fff;"></div>
<div class="t" style="left:847.8px;top:253.60px;font-size:13px;line-height:13px;color:#111;font-weight:normal;letter-spacing:-0.022px;">Pixel Dimensions:  14.1K</div>
<div class="t" style="right:745.5px;top:285.10px;font-size:13px;line-height:13px;color:#111;font-weight:normal;letter-spacing:0.292px;">Width:</div>
<div class="t" style="right:745.5px;top:316.20px;font-size:13px;line-height:13px;color:#111;font-weight:normal;letter-spacing:0.235px;">Height:</div>
<div class="a" style="left:921.5px;top:281.7px;width:82.39999999999998px;height:19.900000000000034px;background:#fff;border:1px solid #a9a9a9;box-shadow:inset 0 1px 0 rgba(0,0,0,0.06);"></div>
<div class="t" style="left:925.7px;top:285.72px;font-size:13.8px;line-height:13.8px;color:#111;font-weight:normal;letter-spacing:-0.150px;">80</div>
<div class="a" style="left:921.5px;top:312.6px;width:82.39999999999998px;height:20.099999999999966px;background:#fff;border:1px solid #a9a9a9;box-shadow:inset 0 1px 0 rgba(0,0,0,0.06);"></div>
<div class="t" style="left:925.7px;top:316.82px;font-size:13.8px;line-height:13.8px;color:#111;font-weight:normal;letter-spacing:-0.150px;">60</div>
<div class="a" style="left:1013.3px;top:280.4px;width:77.70000000000005px;height:22.5px;background:linear-gradient(#fafafa,#e6e6e6);border:1px solid #b4b4b4;box-shadow:0 0.5px 1px rgba(0,0,0,0.15);"></div>
<div class="t" style="left:1021.3px;top:285.20px;font-size:13px;line-height:13px;color:#111;font-weight:normal;letter-spacing:0.264px;">Pixels</div>
<svg style="left:1075px;top:289.15px" width="10" height="6" viewBox="0 0 10 6"><path d="M0 0H9.6L4.8 5.5Z" fill="#555"/></svg>
<div class="a" style="left:1013.3px;top:311.8px;width:77.70000000000005px;height:22.19999999999999px;background:linear-gradient(#fafafa,#e6e6e6);border:1px solid #b4b4b4;box-shadow:0 0.5px 1px rgba(0,0,0,0.15);"></div>
<div class="t" style="left:1021.3px;top:316.30px;font-size:13px;line-height:13px;color:#111;font-weight:normal;letter-spacing:0.264px;">Pixels</div>
<svg style="left:1075px;top:320.4px" width="10" height="6" viewBox="0 0 10 6"><path d="M0 0H9.6L4.8 5.5Z" fill="#555"/></svg>
<svg style="left:1098.5px;top:292.5px" width="24" height="16" viewBox="0 0 24 16"><path d="M0.5 0.7H9.4V14.5H0.5" fill="none" stroke="#aaa" stroke-width="1.6"/><path d="M21.7 6.3C21.7 3.6 20.6 2.2 18.9 2.2C17.2 2.2 16.1 3.6 16.1 6V9.6C16.1 12 17.2 13.6 18.9 13.6C20.6 13.6 21.7 12.2 21.7 9.4" fill="none" stroke="#666" stroke-width="1.6"/><path d="M18.9 5.3V10.6" stroke="#777" stroke-width="1.5"/></svg>
<div class="a" style="left:828.5px;top:360.8px;width:361.29999999999995px;height:114.0px;border:1.2px solid #d9d9d9;"></div>
<div class="a" style="left:846.5px;top:357.8px;width:104.5px;height:6px;background:#fff;"></div>
<div class="t" style="left:851.5px;top:354.30px;font-size:13px;line-height:13px;color:#111;font-weight:normal;letter-spacing:0.210px;">Document Size:</div>
<div class="t" style="right:746.2px;top:386.40px;font-size:13px;line-height:13px;color:#111;font-weight:normal;letter-spacing:0.272px;">Width:</div>
<div class="t" style="right:746.2px;top:417.00px;font-size:13px;line-height:13px;color:#111;font-weight:normal;letter-spacing:0.268px;">Height:</div>
<div class="t" style="right:746.2px;top:448.20px;font-size:13px;line-height:13px;color:#111;font-weight:normal;letter-spacing:0.096px;">Resolution:</div>
<div class="a" style="left:920.3px;top:382.3px;width:82.40000000000009px;height:20.399999999999977px;background:#fff;border:1px solid #a9a9a9;box-shadow:inset 0 1px 0 rgba(0,0,0,0.06);"></div>
<div class="t" style="left:924.5px;top:386.82px;font-size:13.8px;line-height:13.8px;color:#111;font-weight:normal;letter-spacing:-0.150px;">80</div>
<div class="a" style="left:920.3px;top:413.5px;width:82.40000000000009px;height:20.19999999999999px;background:#fff;border:1px solid #a9a9a9;box-shadow:inset 0 1px 0 rgba(0,0,0,0.06);"></div>
<div class="t" style="left:924.5px;top:417.82px;font-size:13.8px;line-height:13.8px;color:#111;font-weight:normal;letter-spacing:-0.150px;">60</div>
<div class="a" style="left:920.3px;top:444.5px;width:82.40000000000009px;height:20.30000000000001px;background:#fff;border:1px solid #a9a9a9;box-shadow:inset 0 1px 0 rgba(0,0,0,0.06);"></div>
<div class="t" style="left:924.5px;top:448.92px;font-size:13.8px;line-height:13.8px;color:#111;font-weight:normal;letter-spacing:-0.150px;">72</div>
<div class="a" style="left:939.8px;top:447.5px;width:1.2px;height:14.300000000000011px;background:#111;"></div>
<div class="a" style="left:1012.2px;top:381.4px;width:137.5999999999999px;height:22.400000000000034px;background:linear-gradient(#fafafa,#e6e6e6);border:1px solid #b4b4b4;box-shadow:0 0.5px 1px rgba(0,0,0,0.15);"></div>
<div class="t" style="left:1020.2px;top:386.10px;font-size:13px;line-height:13px;color:#111;font-weight:normal;letter-spacing:0.274px;">Points</div>
<svg style="left:1133.8px;top:390.1px" width="10" height="6" viewBox="0 0 10 6"><path d="M0 0H9.6L4.8 5.5Z" fill="#555"/></svg>
<div class="a" style="left:1012.2px;top:412.3px;width:137.5999999999999px;height:22.69999999999999px;background:linear-gradient(#fafafa,#e6e6e6);border:1px solid #b4b4b4;box-shadow:0 0.5px 1px rgba(0,0,0,0.15);"></div>
<div class="t" style="left:1020.2px;top:417.30px;font-size:13px;line-height:13px;color:#111;font-weight:normal;letter-spacing:0.274px;">Points</div>
<svg style="left:1133.8px;top:421.15px" width="10" height="6" viewBox="0 0 10 6"><path d="M0 0H9.6L4.8 5.5Z" fill="#555"/></svg>
<div class="a" style="left:1012.2px;top:443.4px;width:137.5999999999999px;height:22.30000000000001px;background:linear-gradient(#fafafa,#e6e6e6);border:1px solid #b4b4b4;box-shadow:0 0.5px 1px rgba(0,0,0,0.15);"></div>
<div class="t" style="left:1020.2px;top:448.00px;font-size:13px;line-height:13px;color:#111;font-weight:normal;letter-spacing:0.114px;">Pixels/Inch</div>
<svg style="left:1133.8px;top:452.04999999999995px" width="10" height="6" viewBox="0 0 10 6"><path d="M0 0H9.6L4.8 5.5Z" fill="#555"/></svg>
<svg style="left:1157.5px;top:393.3px" width="24" height="31" viewBox="0 0 24 31"><path d="M0.5 0.7H9.6V29.3H0.5" fill="none" stroke="#aaa" stroke-width="1.6"/><path d="M21.2 13.8C21.2 11.1 20.1 9.7 18.4 9.7C16.7 9.7 15.6 11.1 15.6 13.5V17.1C15.6 19.5 16.7 21.1 18.4 21.1C20.1 21.1 21.2 19.7 21.2 16.9" fill="none" stroke="#666" stroke-width="1.6"/><path d="M18.4 12.8V18.1" stroke="#777" stroke-width="1.5"/></svg>
<div class="a" style="left:1205.3px;top:203.9px;width:63.5px;height:22.900000000000006px;background:linear-gradient(#fbfbfb,#e4e4e4);border:1.4px solid #6aa2ee;box-shadow:0 0.5px 1px rgba(0,0,0,0.12);"></div>
<div class="t" style="left:1237.05px;transform:translateX(-50%);top:208.57px;font-size:13.5px;line-height:13.5px;color:#111;font-weight:normal;letter-spacing:0.495px;">OK</div>
<div class="a" style="left:1205.3px;top:235.8px;width:63.5px;height:22.899999999999977px;background:linear-gradient(#fbfbfb,#e4e4e4);border:1px solid #b4b4b4;box-shadow:0 0.5px 1px rgba(0,0,0,0.12);"></div>
<div class="t" style="left:1237.05px;transform:translateX(-50%);top:240.47px;font-size:13.5px;line-height:13.5px;color:#111;font-weight:normal;letter-spacing:-0.005px;">Cancel</div>
<div class="a" style="left:1205.3px;top:274.8px;width:63.5px;height:23.0px;background:linear-gradient(#fbfbfb,#e4e4e4);border:1px solid #b4b4b4;box-shadow:0 0.5px 1px rgba(0,0,0,0.12);"></div>
<div class="t" style="left:1237.05px;transform:translateX(-50%);top:279.57px;font-size:13.5px;line-height:13.5px;color:#111;font-weight:normal;letter-spacing:0.411px;">Help</div>
<div class="a" style="left:827.2px;top:484.3px;width:12.8px;height:12.6px;background:linear-gradient(#fdfdfd,#ececec);border:1px solid #8c8c8c;border-radius:1.5px;"></div>
<div class="t" style="left:843.6px;top:483.57px;font-size:12.2px;line-height:12.2px;color:#111;font-weight:normal;letter-spacing:0.079px;">Scale Styles</div>
<div class="a" style="left:827.2px;top:513.2px;width:12.8px;height:12.6px;background:linear-gradient(#c6c6c6,#a4a4a4);border:1px solid #8c8c8c;border-radius:1.5px;"></div>
<svg style="left:828.5px;top:513.7px" width="12" height="11" viewBox="0 0 12 11"><path d="M2.3 5.6L4.6 9.4L10.6 0.6" fill="none" stroke="#1a1a1a" stroke-width="2.1" stroke-linejoin="round" stroke-linecap="round"/></svg>
<div class="t" style="left:843.6px;top:512.47px;font-size:12.2px;line-height:12.2px;color:#111;font-weight:normal;letter-spacing:0.230px;">Constrain Proportions</div>
<div class="a" style="left:827.2px;top:542.2px;width:12.8px;height:12.6px;background:linear-gradient(#c6c6c6,#a4a4a4);border:1px solid #8c8c8c;border-radius:1.5px;"></div>
<svg style="left:828.5px;top:542.7px" width="12" height="11" viewBox="0 0 12 11"><path d="M2.3 5.6L4.6 9.4L10.6 0.6" fill="none" stroke="#1a1a1a" stroke-width="2.1" stroke-linejoin="round" stroke-linecap="round"/></svg>
<div class="t" style="left:843.6px;top:541.47px;font-size:12.2px;line-height:12.2px;color:#111;font-weight:normal;letter-spacing:-0.017px;">Resample Image</div>
<div class="a" style="left:912.6px;top:571.7px;width:277.4px;height:22.0px;background:linear-gradient(#fafafa,#e6e6e6);border:1px solid #b4b4b4;box-shadow:0 0.5px 1px rgba(0,0,0,0.15);"></div>
<div class="t" style="left:920.6px;top:576.00px;font-size:13px;line-height:13px;color:#111;font-weight:normal;letter-spacing:0.386px;">Bicubic (best for smooth gradients)</div>
<svg style="left:1174px;top:580.2px" width="10" height="6" viewBox="0 0 10 6"><path d="M0 0H9.6L4.8 5.5Z" fill="#555"/></svg>
<div class="a" style="left:82px;top:654px;width:1579px;height:130px;background:#e3e3e3;"></div>
<div class="t" style="left:97.5px;top:665.07px;font-size:13.5px;line-height:13.5px;color:#111;font-weight:normal;letter-spacing:0.246px;">Crop</div>
<div class="a" style="left:98.2px;top:687.1px;width:32.8px;height:30.7px;background:#c9c9c9;border:2.2px solid #333;border-radius:5px;"></div>
<svg style="left:98px;top:687px" width="34" height="31" viewBox="0 0 34 31"><path d="M10.4 5.8V22.6H26.7M5.3 11.4H22.6V22.6" fill="none" stroke="#707070" stroke-width="2.2"/><rect x="20" y="24.8" width="3.2" height="3.2" fill="#333"/></svg>
<svg style="left:0px;top:0px" width="1661" height="784" viewBox="0 0 1661 784"><defs><pattern id="chk" width="3" height="3" patternUnits="userSpaceOnUse"><rect width="3" height="3" fill="#fff"/><rect width="1.5" height="1.5" fill="#d4d4d4"/><rect x="1.5" y="1.5" width="1.5" height="1.5" fill="#d4d4d4"/></pattern></defs><path d="M157.50 703.00 L157.41 703.64 L157.15 704.24 L156.73 704.80 L156.18 705.27 L155.53 705.66 L154.82 705.95 L154.23 706.22 L154.52 706.94 L154.71 707.68 L154.77 708.43 L154.70 709.14 L154.49 709.79 L154.14 710.34 L153.66 710.77 L153.08 711.06 L152.43 711.19 L151.72 711.16 L151.01 710.99 L150.31 710.69 L149.65 710.28 L149.15 710.31 L148.75 710.97 L148.26 711.55 L147.70 712.04 L147.08 712.39 L146.44 712.58 L145.79 712.60 L145.17 712.44 L144.60 712.12 L144.12 711.65 L143.73 711.05 L143.45 710.36 L143.28 709.61 L143.21 708.85 L142.67 708.73 L141.91 708.79 L141.15 708.75 L140.44 708.57 L139.81 708.27 L139.29 707.86 L138.91 707.33 L138.69 706.73 L138.64 706.08 L138.75 705.40 L139.02 704.73 L139.42 704.09 L139.93 703.51 L140.50 703.00 L139.93 702.49 L139.42 701.91 L139.02 701.27 L138.75 700.60 L138.64 699.92 L138.69 699.27 L138.91 698.67 L139.29 698.14 L139.81 697.73 L140.44 697.43 L141.15 697.25 L141.91 697.21 L142.67 697.27 L143.21 697.15 L143.28 696.39 L143.45 695.64 L143.73 694.95 L144.12 694.35 L144.60 693.88 L145.17 693.56 L145.79 693.40 L146.44 693.42 L147.08 693.61 L147.70 693.96 L148.26 694.45 L148.75 695.03 L149.15 695.69 L149.65 695.72 L150.31 695.31 L151.01 695.01 L151.72 694.84 L152.43 694.81 L153.08 694.94 L153.66 695.23 L154.14 695.66 L154.49 696.21 L154.70 696.86 L154.77 697.57 L154.71 698.32 L154.52 699.06 L154.23 699.78 L154.82 700.05 L155.53 700.34 L156.18 700.73 L156.73 701.20 L157.15 701.76 L157.41 702.36 L157.50 703.00Z" fill="url(#chk)" stroke="#444" stroke-width="1.3"/><path d="M106 725.5L121.5 727L122 745.5L106.5 746Z" fill="#fff" stroke="#555" stroke-width="1.6"/><circle cx="106" cy="725.5" r="1.4" fill="#555"/><circle cx="121.5" cy="727" r="1.4" fill="#555"/><circle cx="122" cy="745.5" r="1.4" fill="#555"/><circle cx="106.5" cy="746" r="1.4" fill="#555"/><circle cx="116.5" cy="732.5" r="2.6" fill="#333"/><path d="M108.5 742.5L112.5 734.5L116 739.5L118 737.5L120 742Z" fill="#333"/></svg>
<div class="a" style="left:179.89999999999998px;top:682px;width:1.7px;height:91px;background:repeating-linear-gradient(#3a3a3a 0 1.7px, transparent 1.7px 4.15px);"></div>
<div class="a" style="left:411.7px;top:682px;width:1.7px;height:91px;background:repeating-linear-gradient(#3a3a3a 0 1.7px, transparent 1.7px 4.15px);"></div>
<div class="a" style="left:804.7px;top:682px;width:1.7px;height:91px;background:repeating-linear-gradient(#3a3a3a 0 1.7px, transparent 1.7px 4.15px);"></div>
<div class="a" style="left:197.1px;top:685.4px;width:199.79999999999998px;height:20.5px;background:linear-gradient(#fafafa,#e6e6e6);border:1px solid #b8b8b8;box-shadow:0 0.5px 1px rgba(0,0,0,0.12);"></div>
<div class="t" style="left:205.1px;top:689.40px;font-size:13px;line-height:13px;color:#111;font-weight:normal;letter-spacing:-0.358px;">Custom</div>
<svg style="left:380.9px;top:693.15px" width="10" height="6" viewBox="0 0 10 6"><path d="M0 0H9.6L4.8 5.5Z" fill="#555"/></svg>
<div class="t" style="left:198.7px;top:720.42px;font-size:12.5px;line-height:12.5px;color:#111;font-weight:normal;">W:</div>
<div class="a" style="left:222.3px;top:717.4px;width:60.69999999999999px;height:18.399999999999977px;background:#e9e9e9;border:1px solid #b5b5b5;"></div>
<div class="t" style="left:226.8px;top:720.00px;font-size:13px;line-height:13px;color:#111;font-weight:normal;letter-spacing:0.571px;">800 pt</div>
<svg style="left:292.5px;top:720.5px" width="15" height="14" viewBox="0 0 15 14"><path d="M1 4.2H12.5M1 9.8H13.5" stroke="#3a8ae0" stroke-width="2"/><path d="M9.5 0.5L14 4.2L9.5 7.9ZM5 6.1L0.5 9.8L5 13.5Z" fill="#3a8ae0"/></svg>
<div class="t" style="left:313px;top:720.00px;font-size:13px;line-height:13px;color:#111;font-weight:normal;">H:</div>
<div class="a" style="left:334.2px;top:717.4px;width:60.60000000000002px;height:18.399999999999977px;background:#e9e9e9;border:1px solid #b5b5b5;"></div>
<div class="t" style="left:338.7px;top:720.00px;font-size:13px;line-height:13px;color:#111;font-weight:normal;letter-spacing:0.571px;">600 pt</div>
<div class="t" style="left:559px;top:664.00px;font-size:13px;line-height:13px;color:#111;font-weight:normal;letter-spacing:-0.223px;">Crop Suggestions</div>
<div class="a" style="left:428.2px;top:687.4px;width:83.5px;height:83px;background:#bcbcbc;border:1px solid #b2b2b2;"></div>
<svg style="left:438.2px;top:705.2px;overflow:hidden" width="65.8" height="48.8" viewBox="105 133 645 483" preserveAspectRatio="none"><rect x="0" y="0" width="1661" height="784" fill="#fff"/><use href="#torsos"/></svg>
<div class="a" style="left:521.4px;top:687.4px;width:83.30000000000007px;height:83px;background:#bcbcbc;border:1px solid #b2b2b2;"></div>
<svg style="left:528.1px;top:703.0px;overflow:hidden" width="70.9" height="53.1" viewBox="122 183 566 424" preserveAspectRatio="none"><rect x="0" y="0" width="1661" height="784" fill="#fff"/><use href="#torsos"/></svg>
<div class="a" style="left:614.4px;top:687.4px;width:83.39999999999998px;height:83px;background:#bcbcbc;border:1px solid #b2b2b2;"></div>
<svg style="left:620.9px;top:703.3px;overflow:hidden" width="71.2" height="52.8" viewBox="138 153 582 432" preserveAspectRatio="none"><rect x="0" y="0" width="1661" height="784" fill="#fff"/><use href="#torsos"/></svg>
<div class="a" style="left:707.4px;top:687.4px;width:83.39999999999998px;height:83px;background:#bcbcbc;border:1px solid #b2b2b2;"></div>
<svg style="left:713.9px;top:703.3px;overflow:hidden" width="71.2" height="52.8" viewBox="111 134 582 432" preserveAspectRatio="none"><rect x="0" y="0" width="1661" height="784" fill="#fff"/><use href="#torsos"/></svg>
<div class="t" style="left:831.6px;top:689.30px;font-size:13px;line-height:13px;color:#111;font-weight:normal;letter-spacing:-0.304px;">Resolution:</div>
<div class="a" style="left:906.2px;top:686.3px;width:42.59999999999991px;height:18.40000000000009px;background:#e9e9e9;border:1px solid #b5b5b5;"></div>
<div class="t" style="left:910.7px;top:689.30px;font-size:13px;line-height:13px;color:#111;font-weight:normal;letter-spacing:-0.460px;">72</div>
<div class="a" style="left:970.5px;top:685.6px;width:94.5px;height:20.0px;background:linear-gradient(#fafafa,#e6e6e6);border:1px solid #b8b8b8;box-shadow:0 0.5px 1px rgba(0,0,0,0.12);"></div>
<div class="t" style="left:978.5px;top:689.30px;font-size:13px;line-height:13px;color:#111;font-weight:normal;letter-spacing:-0.086px;">Pixels/Inch</div>
<svg style="left:1049px;top:693.1px" width="10" height="6" viewBox="0 0 10 6"><path d="M0 0H9.6L4.8 5.5Z" fill="#555"/></svg>
<div class="t" style="left:821.7px;top:729.00px;font-size:13px;line-height:13px;color:#111;font-weight:normal;letter-spacing:-0.298px;">Grid Overlay:</div>
<div class="a" style="left:905.1px;top:725.2px;width:21.8px;height:21.8px;background:#efefef;border:1px solid #5a5a5a;border-top-color:#777;border-left-color:#777;"></div>
<div class="a" style="left:936.2px;top:716.4px;width:39.7px;height:39.3px;background:#a2a2a2;border:1.2px solid #555;"></div>
<svg style="left:0px;top:0px" width="1661" height="784" viewBox="0 0 1661 784"><rect x="945.7" y="725.7" width="20.8" height="20.8" fill="#cfcfcf" stroke="#444" stroke-width="1.2"/><path d="M952.63 725.7V746.5M945.7 732.63H966.5" stroke="#444" stroke-width="1"/><path d="M959.57 725.7V746.5M945.7 739.57H966.5" stroke="#444" stroke-width="1"/><rect x="985.7" y="725.7" width="20" height="20.8" fill="#fff" stroke="#444" stroke-width="1.2"/><path d="M989.70 725.7V746.5M985.7 729.86H1005.7" stroke="#444" stroke-width="1"/><path d="M993.70 725.7V746.5M985.7 734.02H1005.7" stroke="#444" stroke-width="1"/><path d="M997.70 725.7V746.5M985.7 738.18H1005.7" stroke="#444" stroke-width="1"/><path d="M1001.70 725.7V746.5M985.7 742.34H1005.7" stroke="#444" stroke-width="1"/></svg>
<svg style="left:1587.8px;top:661.1px" width="13" height="13" viewBox="0 0 13 13"><circle cx="6.5" cy="6.5" r="6.5" fill="#6f6f6f"/><path d="M4.4 5C4.4 3.6 5.3 2.9 6.5 2.9C7.8 2.9 8.6 3.7 8.6 4.8C8.6 6.2 6.8 6.3 6.8 7.9" fill="none" stroke="#fff" stroke-width="1.5"/><circle cx="6.8" cy="9.9" r="0.95" fill="#fff"/></svg>
<svg style="left:1610px;top:662.5px" width="16" height="12" viewBox="0 0 16 12"><path d="M7.5 1H15.5M7.5 4.3H15.5M7.5 7.6H15.5M7.5 10.9H15.5" stroke="#4a7fb8" stroke-width="1.3"/><path d="M0.3 3.6H5.2L2.75 6.5Z" fill="#4a8ad0"/></svg>
<svg style="left:1637px;top:664px" width="11" height="7" viewBox="0 0 11 7"><path d="M1 1L5.3 5.3L9.6 1" fill="none" stroke="#222" stroke-width="2"/></svg>
</body></html>
